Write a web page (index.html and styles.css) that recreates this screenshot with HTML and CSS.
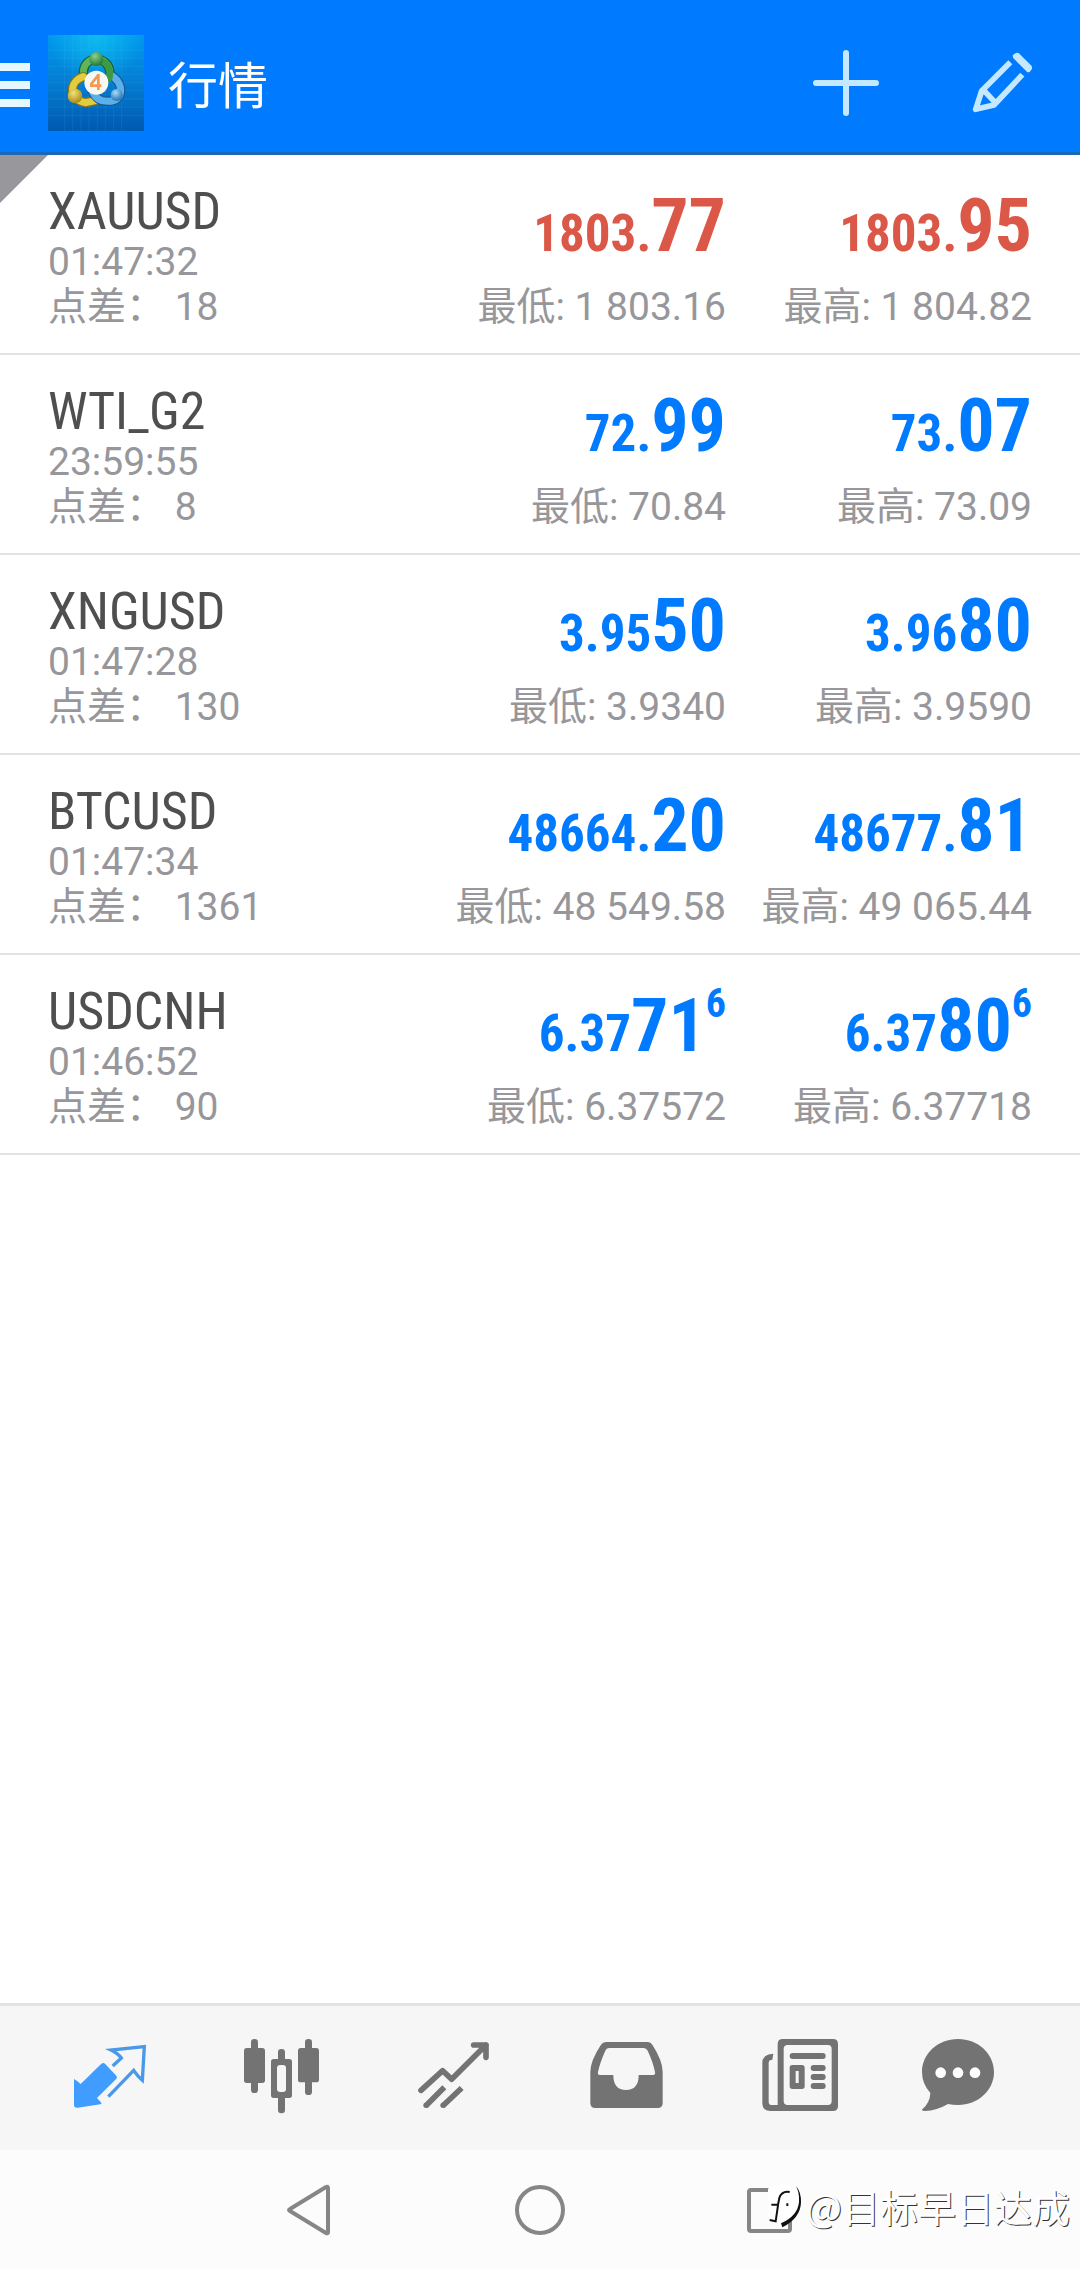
FILE: index.html
```html
<!DOCTYPE html>
<html lang="zh-CN">
<head>
<meta charset="utf-8">
<meta name="viewport" content="width=device-width, initial-scale=1">
<title>行情</title>
<link rel="stylesheet" href="styles.css">
</head>
<body>
<div class="app">
  <header class="app-bar">
    <button class="menu-button" type="button" aria-label="菜单">
      <span class="menu-line"></span><span class="menu-line"></span><span class="menu-line"></span>
    </button>
    <svg class="icon" viewBox="144 105 288 288" aria-hidden="true">
      <defs>
        <linearGradient id="sky" x1="0" y1="0" x2="0" y2="1"><stop offset="0" stop-color="#0098ee"/><stop offset=".45" stop-color="#0480d4"/><stop offset="1" stop-color="#0059b0"/></linearGradient>
        <radialGradient id="glow" cx=".5" cy="0" r=".5"><stop offset="0" stop-color="#12c4ee" stop-opacity=".8"/><stop offset="1" stop-color="#12c4ee" stop-opacity="0"/></radialGradient>
        <radialGradient id="green" cx=".4" cy=".3" r=".7"><stop offset="0" stop-color="#8fd08a"/><stop offset="1" stop-color="#1f7a35"/></radialGradient>
        <radialGradient id="gold" cx=".4" cy=".3" r=".7"><stop offset="0" stop-color="#f2e27a"/><stop offset="1" stop-color="#a98a14"/></radialGradient>
        <radialGradient id="blue" cx=".4" cy=".3" r=".7"><stop offset="0" stop-color="#a8dcfa"/><stop offset="1" stop-color="#1f74b8"/></radialGradient>
      </defs>
      <path fill="url(#sky)" d="M144 105h288v288H144z"/>
      <path fill="url(#glow)" d="M144 105h288v288H144z"/>
      <path stroke="#6fd0ff" stroke-opacity=".16" stroke-width="2" d="M194 105v288M218 105v288M243 105v288M267 105v288M292 105v288M316 105v288M341 105v288M365 105v288M144 150h288M144 174h288M144 199h288M144 223h288M144 248h288M144 272h288M144 297h288M144 321h288M144 346h288"/>
      <g fill="none" stroke-linecap="round">
        <path stroke="#14602f" stroke-width="28" d="M250 216c2-52 76-52 80 2"/>
        <path stroke="#5fb65a" stroke-width="21" d="M250 216c2-52 76-52 80 2"/>
        <path stroke="#8c7414" stroke-width="28" d="M250 230c-44 14-44 70 6 78l30-6"/>
        <path stroke="#e3cc3e" stroke-width="21" d="M250 230c-44 14-44 70 6 78l30-6"/>
        <path stroke="#165a94" stroke-width="28" d="M330 224c44 22 44 82-8 80-24 0-38-14-44-28"/>
        <path stroke="#5cb0ea" stroke-width="21" d="M330 224c44 22 44 82-8 80-24 0-38-14-44-28"/>
        <path stroke="#3c9a43" stroke-width="20" d="M312 186c16 10 20 30 16 48"/>
      </g>
      <circle cx="289" cy="177" r="21" fill="url(#green)"/>
      <circle cx="225" cy="288" r="22" fill="url(#gold)"/>
      <circle cx="350" cy="285" r="18" fill="url(#blue)"/>
      <circle cx="289" cy="248" r="36" fill="#f7f7f4"/>
      <path fill="none" stroke="#f39a52" stroke-width="8" d="M296 224l-22 28v5h30M295 222v48"/>
    </svg>
    <h1 class="app-title">行情</h1>
    <div class="app-actions">
      <button class="icon-button" type="button" aria-label="添加">
        <svg class="icon" viewBox="54 45 288 288" aria-hidden="true"><path fill="none" stroke="#c3e8ff" stroke-width="18" stroke-linecap="round" d="M198 99v180M108 189h180"/></svg>
      </button>
      <button class="icon-button" type="button" aria-label="编辑">
        <svg class="icon" viewBox="522 45 288 288" aria-hidden="true">
          <g fill="none" stroke="#c3e8ff" stroke-width="17" stroke-linejoin="round">
            <path d="M691 127l-86 86-18 55 55-13 85-91M612 212l34 36"/>
            <path stroke-width="20" d="M706 106l44 44"/>
          </g>
          <path fill="#c3e8ff" d="M698 106l8-6q6-4 12 1l35 35q5 6 2 12l-6 8q-4 2-8-1l-42-43z"/>
        </svg>
      </button>
    </div>
  </header>

  <main class="quotes">
    <ul class="quote-list">
      <li class="quote down">
        <div class="instrument"><h2 class="symbol">XAUUSD</h2><p class="meta">01:47:32</p><p class="meta">点差： 18</p></div>
        <div class="side"><p class="price">1803.<span class="pips">77</span></p><p class="meta">最低: 1 803.16</p></div>
        <div class="side"><p class="price">1803.<span class="pips">95</span></p><p class="meta">最高: 1 804.82</p></div>
      </li>
      <li class="quote">
        <div class="instrument"><h2 class="symbol">WTI_G2</h2><p class="meta">23:59:55</p><p class="meta">点差： 8</p></div>
        <div class="side"><p class="price">72.<span class="pips">99</span></p><p class="meta">最低: 70.84</p></div>
        <div class="side"><p class="price">73.<span class="pips">07</span></p><p class="meta">最高: 73.09</p></div>
      </li>
      <li class="quote">
        <div class="instrument"><h2 class="symbol">XNGUSD</h2><p class="meta">01:47:28</p><p class="meta">点差： 130</p></div>
        <div class="side"><p class="price">3.95<span class="pips">50</span></p><p class="meta">最低: 3.9340</p></div>
        <div class="side"><p class="price">3.96<span class="pips">80</span></p><p class="meta">最高: 3.9590</p></div>
      </li>
      <li class="quote">
        <div class="instrument"><h2 class="symbol">BTCUSD</h2><p class="meta">01:47:34</p><p class="meta">点差： 1361</p></div>
        <div class="side"><p class="price">48664.<span class="pips">20</span></p><p class="meta">最低: 48 549.58</p></div>
        <div class="side"><p class="price">48677.<span class="pips">81</span></p><p class="meta">最高: 49 065.44</p></div>
      </li>
      <li class="quote">
        <div class="instrument"><h2 class="symbol">USDCNH</h2><p class="meta">01:46:52</p><p class="meta">点差： 90</p></div>
        <div class="side"><p class="price">6.37<span class="pips">71</span><sup class="point">6</sup></p><p class="meta">最低: 6.37572</p></div>
        <div class="side"><p class="price">6.37<span class="pips">80</span><sup class="point">6</sup></p><p class="meta">最高: 6.37718</p></div>
      </li>
    </ul>
  </main>

  <nav class="tab-bar">
    <a class="tab active" href="#quotes" aria-label="行情">
      <svg class="icon" viewBox="186 120 288 288" aria-hidden="true">
        <path fill="currentColor" d="M222 267q11 6 20 15l62-61q6-4 11 0l34 36q4 5 0 9l-58 58 13 14q2 4-3 5l-68 10q-11 1-11-9z"/>
        <path fill="none" stroke="#4a98e8" stroke-width="10" d="M338 228l26-24q-10-14-31-24l100-10-6 101q-14-12-26-30l-76 79"/>
      </svg>
    </a>
    <a class="tab" href="#charts" aria-label="图表">
      <svg class="icon" viewBox="702 120 288 288" aria-hidden="true">
        <g fill="currentColor">
          <rect x="732" y="174" width="63" height="105" rx="8"/><rect x="753" y="147" width="21" height="162" rx="10"/>
          <rect x="894" y="174" width="63" height="103" rx="8"/><rect x="915" y="147" width="21" height="168" rx="10"/>
          <rect x="834" y="177" width="21" height="44" rx="10"/><rect x="834" y="310" width="21" height="60" rx="10"/>
          <path fill-rule="evenodd" d="M821 207h47q8 0 8 8v101q0 8-8 8h-47q-8 0-8-8V215q0-8 8-8zm20 18q-10 0-10 9v63q0 9 10 9h8q9 0 9-9v-63q0-9-9-9z"/>
        </g>
      </svg>
    </a>
    <a class="tab" href="#trade" aria-label="交易">
      <svg class="icon" viewBox="138 120 288 288" aria-hidden="true">
        <g fill="none" stroke="currentColor" stroke-width="17" stroke-linejoin="round">
          <path stroke-linecap="round" d="M183 301l65-59 27 26L378 165M341 165h37v37"/>
          <path d="M197 348l56-56M248 348l57-54"/>
        </g>
        <circle cx="198" cy="346" r="8" fill="currentColor"/><circle cx="249" cy="346" r="8" fill="currentColor"/>
      </svg>
    </a>
    <a class="tab" href="#history" aria-label="历史">
      <svg class="icon" viewBox="654 120 288 288" aria-hidden="true">
        <path fill="currentColor" fill-rule="evenodd" d="M738 156h126q8 0 13 8 31 48 31 82v93q0 15-15 15H706q-15 0-15-15v-93q0-34 32-82 5-8 15-8zm9 18q-8 0-11 8-16 35-22 64-2 9 6 9h40q0 45 38 45t38-45h43q8 0 6-9-6-30-22-64-4-8-12-8z"/>
      </svg>
    </a>
    <a class="tab" href="#news" aria-label="新闻">
      <svg class="icon" viewBox="90 120 288 288" aria-hidden="true">
        <g fill="currentColor">
          <path fill-rule="evenodd" d="M188 147h151q15 0 15 15v186q0 15-15 15H152q-25 0-25-23V218q0-25 33-27l-3 18q-11 0-11 10v116q0 10 10 10h17V162q0-15 15-15zm15 18q-12 0-12 12v156q0 12 12 12h121q11 0 11-12V177q0-12-11-12z"/>
          <rect x="209" y="189" width="108" height="18" rx="9"/>
          <rect x="272" y="225" width="45" height="18" rx="9"/><rect x="272" y="252" width="45" height="18" rx="9"/><rect x="272" y="279" width="45" height="18" rx="9"/>
          <path fill-rule="evenodd" d="M217 225h29q8 0 8 8v56q0 8-8 8h-29q-8 0-8-8v-56q0-8 8-8zm10 18v36h9v-36z"/>
        </g>
      </svg>
    </a>
    <a class="tab" href="#messages" aria-label="消息">
      <svg class="icon" viewBox="606 120 288 288" aria-hidden="true">
        <path fill="currentColor" d="M714 147c60 0 108 44 108 99s-48 99-108 99q-16 0-30-3-34 20-70 21-10 0-7-5 23-20 24-49-25-28-25-63c0-55 48-99 108-99z"/>
        <g fill="#fff"><circle cx="662" cy="248" r="16"/><circle cx="714" cy="248" r="16"/><circle cx="765" cy="248" r="16"/></g>
      </svg>
    </a>
  </nav>

  <footer class="system-bar">
    <button class="icon-button" type="button" aria-label="返回">
      <svg class="icon" viewBox="-48 -48 96 96" aria-hidden="true"><path fill="none" stroke="#868686" stroke-width="4" stroke-linejoin="round" d="M18-22v44q0 2-2 1L-20 1q-2-1 0-2l36-22q2-1 2 1z"/></svg>
    </button>
    <button class="icon-button" type="button" aria-label="主屏幕">
      <svg class="icon" viewBox="-48 -48 96 96" aria-hidden="true"><circle r="23" fill="none" stroke="#868686" stroke-width="4"/></svg>
    </button>
    <button class="icon-button" type="button" aria-label="最近任务">
      <svg class="icon" viewBox="-48 -48 96 96" aria-hidden="true"><rect x="-21" y="-20" width="41" height="41" rx="2" fill="none" stroke="#868686" stroke-width="4"/></svg>
    </button>
    <div class="watermark">
      <svg class="watermark-logo" viewBox="144 114 102 144" aria-hidden="true">
        <path fill="#fff" d="M130 150q14-27 59-27 54 4 54 52 0 42-58 75l-10-16q-45-10-45-45z"/>
        <path fill="#111" d="M228 126q16 18 15 50-2 46-56 74l-4-12q50-22 54-64 2-28-9-48z"/>
        <path fill="none" stroke="#111" stroke-width="6" d="M209 144q-24-4-31 18l-4 20h-20M174 184l-7 48-18-4M202 178v8"/>
      </svg>
      <span class="watermark-text">@目标早日达成</span>
    </div>
  </footer>
</div>
</body>
</html>
```
FILE: styles.css
```css
* { box-sizing: border-box; }

body {
  margin: 0;
  background: #fff;
  font-family: Roboto, "Noto Sans CJK SC", sans-serif;
}

h1, h2, p, ul { margin: 0; padding: 0; font-weight: 400; }

button { margin: 0; padding: 0; border: 0; background: none; }

.app { display: flex; flex-direction: column; min-height: 100vh; }

.icon { display: block; width: 96px; height: 96px; flex: none; }

.icon-button { width: 96px; height: 96px; }

/* Top bar */
.app-bar {
  display: flex;
  align-items: center;
  padding: 35px 30px 21px 0;
  background: #007aff;
  border-bottom: 3px solid #1a69b8;
}

.menu-button {
  display: flex;
  flex-direction: column;
  gap: 10px;
  width: 48px;
  padding-top: 4px;
}

.menu-line { width: 30px; height: 8px; background: #e6f8ff; }

.app-title {
  margin-left: 24px;
  padding-top: 8px;
  font-size: 50px;
  line-height: 60px;
  color: #fff;
}

.app-actions { display: flex; gap: 60px; margin-left: auto; }

/* Quotes */
.quotes { position: relative; flex: 1; }

.quotes::before {
  content: "";
  position: absolute;
  top: 0;
  left: 0;
  border: 24px solid #98989c;
  border-right-color: transparent;
  border-bottom-color: transparent;
}

.quote-list { list-style: none; }

.quote {
  display: grid;
  grid-template-columns: 372fr 306fr 306fr;
  padding: 28px 48px 23px;
  border-bottom: 2px solid #e2e2e2;
}

.symbol {
  font-family: "Roboto Condensed", "Liberation Sans Narrow", Roboto, sans-serif;
  font-size: 52px;
  line-height: 57px;
  color: #4f4f4f;
}

.meta {
  font-size: 39px;
  line-height: 45px;
  color: #97979b;
  white-space: nowrap;
}

.side {
  display: flex;
  flex-direction: column;
  align-items: flex-end;
  justify-content: space-between;
}

.price {
  font-family: "Roboto Condensed", "Liberation Sans Narrow", Roboto, sans-serif;
  font-size: 51px;
  font-weight: 700;
  line-height: 85px;
  color: #007aff;
  white-space: nowrap;
}

.down .price { color: #db5848; }

.pips { font-size: 74px; }

.point { font-size: 40px; line-height: 1; vertical-align: 34px; }

/* Bottom tabs */
.tab-bar {
  display: grid;
  grid-template-columns: repeat(6, 1fr);
  padding: 24px;
  background: #f6f6f6;
  border-top: 3px solid #e2e2e2;
}

.tab { display: flex; justify-content: center; color: #737373; }

.tab.active { color: #409cff; }

/* System navigation */
.system-bar {
  position: relative;
  display: flex;
  justify-content: center;
  gap: 134px;
  padding: 12px 0;
  background: #fcfcfc;
}

.watermark {
  position: absolute;
  right: 10px;
  bottom: 36px;
  display: flex;
  align-items: center;
  gap: 4px;
  pointer-events: none;
}

.watermark-logo { width: 34px; height: 48px; }

.watermark-text {
  font-family: "Noto Sans CJK SC", sans-serif;
  font-size: 38px;
  line-height: 56px;
  color: #fff;
  text-shadow: 1px 1px 0 #333;
}
```
